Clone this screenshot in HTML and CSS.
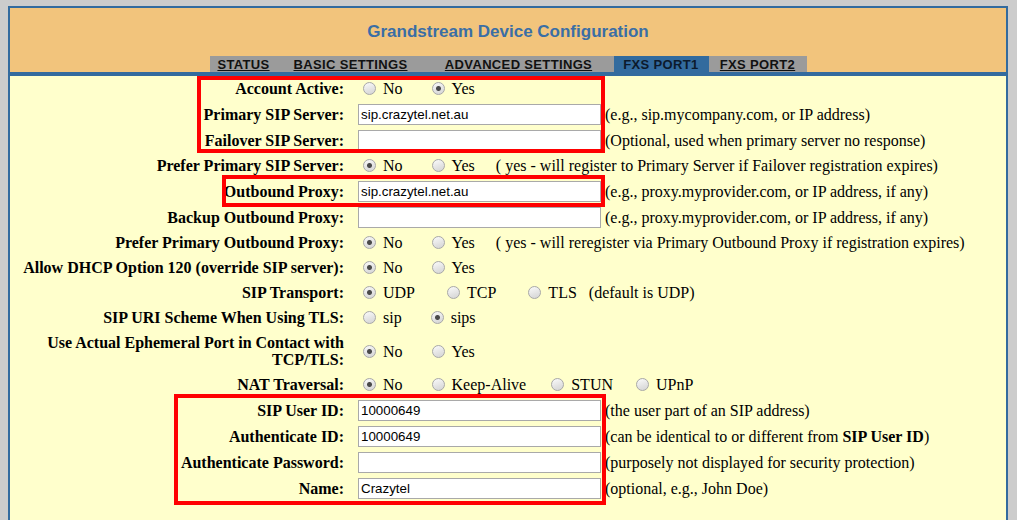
FILE: index.html
```html
<!doctype html>
<html lang="en">
<head>
	<meta charset="utf-8" />
	<title>Grandstream Device Configuration</title>
	<link rel="stylesheet" href="styles.css">
</head>
<body>

	<div class="frame">

		<!-- BEGIN: Header. -->
		<div class="header">
			<h1 class="header__title">Grandstream Device Configuration</h1>
			<div class="tabs">
				<a class="tabs__item tabs__item--status" href="#">STATUS</a>
				<a class="tabs__item tabs__item--basic" href="#">BASIC SETTINGS</a>
				<a class="tabs__item tabs__item--advanced" href="#">ADVANCED SETTINGS</a>
				<span class="tabs__item tabs__item--port1 tabs__item--active">FXS PORT1</span>
				<a class="tabs__item tabs__item--port2" href="#">FXS PORT2</a>
			</div>
		</div>
		<!-- END: Header. -->

		<!-- BEGIN: Config form. -->
		<form class="config">

			<div class="config__row">
				<div class="config__label">Account Active:</div>
				<div class="config__value">
					<label class="choice"><input type="radio" name="active">No</label>
					<label class="choice"><input type="radio" name="active" checked>Yes</label>
				</div>
			</div>

			<div class="config__row config__row--field">
				<div class="config__label">Primary SIP Server:</div>
				<div class="config__value">
					<input class="field" type="text" value="sip.crazytel.net.au">
					<span class="note">(e.g., sip.mycompany.com, or IP address)</span>
				</div>
			</div>

			<div class="config__row config__row--field">
				<div class="config__label">Failover SIP Server:</div>
				<div class="config__value">
					<input class="field" type="text" value="">
					<span class="note">(Optional, used when primary server no response)</span>
				</div>
			</div>

			<div class="config__row">
				<div class="config__label">Prefer Primary SIP Server:</div>
				<div class="config__value">
					<label class="choice"><input type="radio" name="prefer-primary" checked>No</label>
					<label class="choice"><input type="radio" name="prefer-primary">Yes</label>
					<span class="note note--radio">( yes - will register to Primary Server if Failover registration expires)</span>
				</div>
			</div>

			<div class="config__row config__row--field">
				<div class="config__label">Outbound Proxy:</div>
				<div class="config__value">
					<input class="field" type="text" value="sip.crazytel.net.au">
					<span class="note">(e.g., proxy.myprovider.com, or IP address, if any)</span>
				</div>
			</div>

			<div class="config__row config__row--field">
				<div class="config__label">Backup Outbound Proxy:</div>
				<div class="config__value">
					<input class="field" type="text" value="">
					<span class="note">(e.g., proxy.myprovider.com, or IP address, if any)</span>
				</div>
			</div>

			<div class="config__row">
				<div class="config__label">Prefer Primary Outbound Proxy:</div>
				<div class="config__value">
					<label class="choice"><input type="radio" name="prefer-proxy" checked>No</label>
					<label class="choice"><input type="radio" name="prefer-proxy">Yes</label>
					<span class="note note--radio">( yes - will reregister via Primary Outbound Proxy if registration expires)</span>
				</div>
			</div>

			<div class="config__row">
				<div class="config__label">Allow DHCP Option 120 (override SIP server):</div>
				<div class="config__value">
					<label class="choice"><input type="radio" name="dhcp" checked>No</label>
					<label class="choice"><input type="radio" name="dhcp">Yes</label>
				</div>
			</div>

			<div class="config__row">
				<div class="config__label">SIP Transport:</div>
				<div class="config__value">
					<label class="choice choice--spaced"><input type="radio" name="transport" checked>UDP</label>
					<label class="choice choice--spaced"><input type="radio" name="transport">TCP</label>
					<label class="choice"><input type="radio" name="transport">TLS</label>
					<span class="note note--tight">(default is UDP)</span>
				</div>
			</div>

			<div class="config__row">
				<div class="config__label">SIP URI Scheme When Using TLS:</div>
				<div class="config__value">
					<label class="choice"><input type="radio" name="scheme">sip</label>
					<label class="choice"><input type="radio" name="scheme" checked>sips</label>
				</div>
			</div>

			<div class="config__row config__row--tall">
				<div class="config__label">Use Actual Ephemeral Port in Contact with TCP/TLS:</div>
				<div class="config__value">
					<label class="choice"><input type="radio" name="ephemeral" checked>No</label>
					<label class="choice"><input type="radio" name="ephemeral">Yes</label>
				</div>
			</div>

			<div class="config__row">
				<div class="config__label">NAT Traversal:</div>
				<div class="config__value">
					<label class="choice"><input type="radio" name="nat" checked>No</label>
					<label class="choice choice--keep"><input type="radio" name="nat">Keep-Alive</label>
					<label class="choice choice--stun"><input type="radio" name="nat">STUN</label>
					<label class="choice"><input type="radio" name="nat">UPnP</label>
				</div>
			</div>

			<div class="config__row config__row--field">
				<div class="config__label">SIP User ID:</div>
				<div class="config__value">
					<input class="field" type="text" value="10000649">
					<span class="note">(the user part of an SIP address)</span>
				</div>
			</div>

			<div class="config__row config__row--field">
				<div class="config__label">Authenticate ID:</div>
				<div class="config__value">
					<input class="field" type="text" value="10000649">
					<span class="note">(can be identical to or different from <strong>SIP User ID</strong>)</span>
				</div>
			</div>

			<div class="config__row config__row--field">
				<div class="config__label">Authenticate Password:</div>
				<div class="config__value">
					<input class="field" type="password" value="">
					<span class="note">(purposely not displayed for security protection)</span>
				</div>
			</div>

			<div class="config__row config__row--field">
				<div class="config__label">Name:</div>
				<div class="config__value">
					<input class="field" type="text" value="Crazytel">
					<span class="note">(optional, e.g., John Doe)</span>
				</div>
			</div>

		</form>
		<!-- END: Config form. -->

		<!-- Red annotation boxes drawn over the form. -->
		<div class="mark mark--server"></div>
		<div class="mark mark--proxy"></div>
		<div class="mark mark--account"></div>

	</div>

</body>
</html>
```

FILE: styles.css
```css
html {
	box-sizing: border-box ;
}

*, *:before, *:after {
	box-sizing: inherit ;
}

body {
	background-color: #cccccc ;
	color: #000000 ;
	font-family: "Liberation Serif", "Times New Roman", serif ;
	font-size: 16px ;
	margin: 0px 0px 0px 0px ;
}

.frame {
	background-color: #ffffcc ;
	border: 2px solid #336b9e ;
	border-bottom: none ;
	height: 514px ;
	margin: 6px 0px 0px 8px ;
	position: relative ;
	width: 1000px ;
}

/* BEGIN: Header. */
.header {
	background-color: #f2c47c ;
	border-bottom: 4px solid #336b9e ;
}

.header__title {
	color: #3a6ea5 ;
	font-family: "Liberation Sans", Arial, sans-serif ;
	font-size: 17px ;
	font-weight: bold ;
	line-height: 48px ;
	margin: 0px 0px 0px 0px ;
	text-align: center ;
}

.tabs {
	display: flex ;
	justify-content: center ;
}

.tabs__item {
	background-color: #9b9b9b ;
	color: #111111 ;
	font-family: "Liberation Sans", Arial, sans-serif ;
	font-size: 13px ;
	font-weight: bold ;
	height: 16px ;
	letter-spacing: 0.35px ;
	line-height: 17px ;
	text-align: center ;
	text-decoration: underline ;
}

.tabs__item--status { width: 68px ; }
.tabs__item--basic { width: 146px ; }
.tabs__item--advanced { width: 190px ; }
.tabs__item--port1 { width: 95px ; }
.tabs__item--port2 { width: 98px ; }

.tabs__item--active {
	background-color: #336b9e ;
	color: #0c1a2c ;
	text-decoration: none ;
}
/* END: Header. */

/* BEGIN: Config form. */
.config {
	margin: 0px 0px 0px 0px ;
	padding: 0px 0px 0px 0px ;
}

.config__row {
	align-items: center ;
	display: grid ;
	grid-template-columns: 336px 1fr ;
	min-height: 25px ;
}

.config__row--field {
	min-height: 26px ;
}

.config__row--tall {
	min-height: 42px ;
}

.config__label {
	font-weight: bold ;
	line-height: 17px ;
	padding: 0px 2px 0px 0px ;
	text-align: right ;
}

.config__value {
	align-items: center ;
	display: flex ;
	line-height: 17px ;
	padding: 0px 0px 0px 12px ;
	white-space: nowrap ;
}

.field {
	background-color: #ffffff ;
	border: 1px solid #a9a9a9 ;
	color: #000000 ;
	font-family: "Liberation Sans", Arial, sans-serif ;
	font-size: 13.333px ;
	height: 21px ;
	margin: 0px 0px 0px 0px ;
	padding: 1px 2px 1px 2px ;
	width: 243px ;
}

.note {
	margin-left: 4px ;
}

.note--radio {
	margin-left: 21px ;
}

.note--tight {
	margin-left: 12px ;
}

.choice {
	align-items: center ;
	display: inline-flex ;
	margin-right: 24px ;
}

.choice:last-of-type {
	margin-right: 0px ;
}

.choice--spaced {
	margin-right: 27px ;
}

.choice--keep {
	margin-right: 20px ;
}

.choice--stun {
	margin-right: 18px ;
}

.choice input {
	appearance: none ;
	-webkit-appearance: none ;
	background: linear-gradient( 160deg, #fbfbfb 0%, #e2e2e2 60%, #d4d4d4 100% ) ;
	border: 1px solid #a8a8a8 ;
	border-radius: 50% ;
	height: 13px ;
	margin: 0px 7px 0px 5px ;
	width: 13px ;
}

.choice input:checked {
	background:
		radial-gradient( circle, #4a4a4a 0px, #4a4a4a 2px, rgba( 74, 74, 74, 0 ) 3px ),
		linear-gradient( 160deg, #fbfbfb 0%, #e2e2e2 60%, #d4d4d4 100% ) ;
}
/* END: Config form. */

/* Annotation boxes - they sit over the form content. */
.mark {
	border: 4px solid #ff0000 ;
	position: absolute ;
}

.mark--server {
	height: 77px ;
	left: 187px ;
	top: 68px ;
	width: 408px ;
}

.mark--proxy {
	height: 32px ;
	left: 212px ;
	top: 167px ;
	width: 383px ;
}

.mark--account {
	height: 111px ;
	left: 164px ;
	top: 386px ;
	width: 432px ;
}
```
